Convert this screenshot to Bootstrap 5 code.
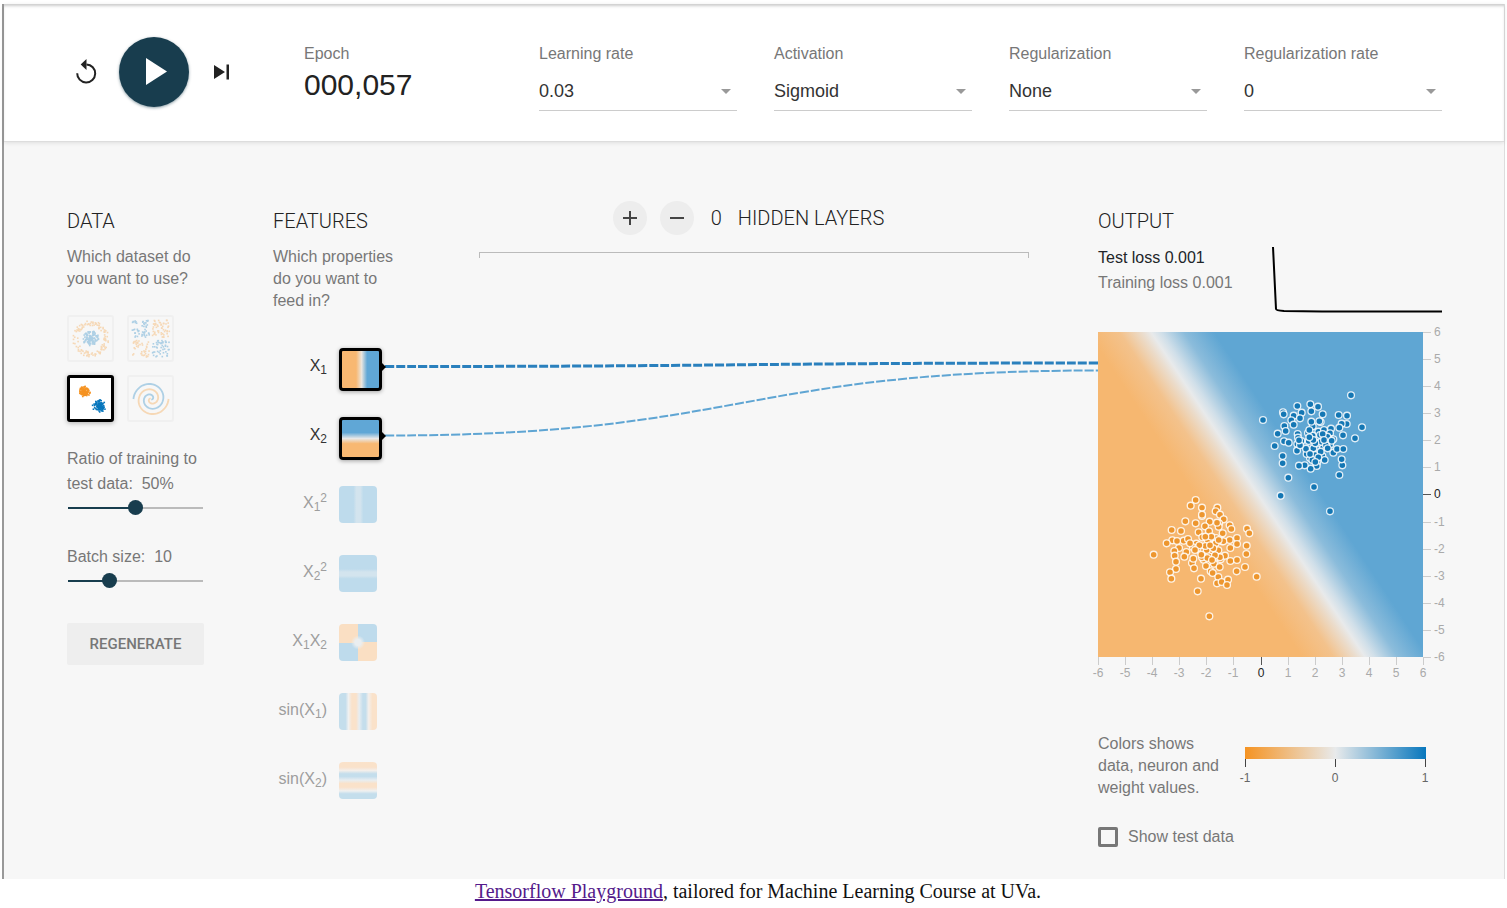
<!DOCTYPE html>
<html lang="en">
<head>
<meta charset="utf-8">
<meta name="viewport" content="width=device-width, initial-scale=1">
<title>Tensorflow Playground</title>
<link href="https://cdn.jsdelivr.net/npm/bootstrap@5.3.0/dist/css/bootstrap.min.css" rel="stylesheet">
<style>
body{font-family:"Liberation Sans",Arial,sans-serif;font-size:16px;line-height:22px;color:#777;background:#fff}
.frame{margin:4px 2px 0;border-left:2px solid #999;border-right:1px solid #ddd;background:#f7f7f7}
.topbar{background:#fff;padding:33px 62px 30px 63px;border-bottom:1px solid #ddd;box-shadow:inset 0 3px 3px -1px #ccc,0 1px 4px rgba(0,0,0,.1);display:grid;grid-template-columns:200px repeat(5,1fr);column-gap:37px}
.controls{height:70px}
.icon-btn{border:0;background:none;padding:0;color:#222;line-height:0}
.play-btn{width:70px;height:70px;margin-left:19px;border-radius:50%;background:#183d4e;color:#fff;box-shadow:0 1px 3px rgba(24,61,78,.5)}
.field-label{display:block;line-height:22px;margin-top:6px}
.epoch-value{font-size:30px;line-height:40px;color:#222}
.pick{appearance:none;border:0;border-bottom:1px solid #ccc;border-radius:0;width:100%;padding:0 0 2px;margin-top:8px;height:38px;font-size:18px;color:#333;background:url("data:image/svg+xml,%3Csvg xmlns='http://www.w3.org/2000/svg' width='10' height='5'%3E%3Cpath d='M0 0h10L5 5z' fill='%23999'/%3E%3C/svg%3E") no-repeat right 6px top 16px}
.workspace{padding:59px 62px 32px 63px;display:grid;grid-template-columns:137px 137px 1fr 344px;column-gap:69px;align-items:start}
.workspace>section{grid-row:1}
.side{padding-top:9px}
h2{font-family:Roboto,sans-serif;font-size:20px;line-height:22px;font-weight:300;color:#222;margin:0 0 13px}
.intro{margin:14px 0 0}
.sets{display:grid;grid-template-columns:47px 47px;gap:13px;margin-top:25px}
.set-btn{height:47px;padding:0;border:2px solid #f0f0f0;border-radius:3px;background:none;line-height:0}
.set-btn svg{display:block;width:100%;height:100%;opacity:.3}
.set-btn.chosen{border:3px solid #000;background:#fff;box-shadow:0 1px 5px rgba(0,0,0,.3)}
.set-btn.chosen svg{opacity:1}
.slide-label{display:block;line-height:25px;margin-top:24px}
.slide-label.batch{margin-top:29px}
.slider{appearance:none;display:block;width:100%;height:15px;margin:4px 0 0;background:linear-gradient(#183d4e,#183d4e) 1px 7px/var(--fill) 2px no-repeat,linear-gradient(#bbb,#bbb) 1px 7px/135px 2px no-repeat}
.slider::-webkit-slider-thumb{appearance:none;width:15px;height:15px;border-radius:50%;background:#183d4e}
.slider::-moz-range-thumb{border:0;width:15px;height:15px;border-radius:50%;background:#183d4e}
.regen{width:100%;height:42px;margin-top:35px;padding:0;border:0;border-radius:2px;background:#eee;color:#777;font:500 15px Roboto,sans-serif}
.feats{margin-top:36px}
.feat{height:69px;display:flex;gap:12px;opacity:.8}
.feat label{width:54px;text-align:right;line-height:34px;color:#888;white-space:nowrap}
.feat sub,.feat sup{font-size:12px}
.swatch{position:relative;flex:none;width:38px;height:37px;border:0;padding:0;border-radius:4px}
.feat.on{opacity:1}
.feat.on label{color:#333;line-height:36px}
.on .swatch{width:43px;height:43px;border:3px solid #000;box-shadow:0 1px 4px rgba(0,0,0,.35)}
.on .swatch::after{content:"";position:absolute;left:100%;top:50%;margin:-8px 0 0 2px;border:5px solid transparent;border-left-color:#000;border-right:0}
.f-x1{background:linear-gradient(90deg,#f8b872 38%,#ebe6df 53%,#60a7d6 68%)}
.f-x2{background:linear-gradient(#60a7d6 34%,#e8e8e8 50%,#f8b872 64%)}
.f-x1sq{background:linear-gradient(90deg,#b1d5ea 38%,#cbe0ec 46%,#cbe0ec 56%,#b1d5ea 64%)}
.f-x2sq{background:linear-gradient(#b1d5ea 38%,#cbe0ec 46%,#cbe0ec 56%,#b1d5ea 64%)}
.f-x1x2{background:radial-gradient(circle,#e8edef 3px,transparent 7px),conic-gradient(#b1d5ea 25%,#fbdab7 0 50%,#b1d5ea 0 75%,#fbdab7 0)}
.f-sin1{background:linear-gradient(90deg,#b8d8ea 17%,#eef0f0 25%,#fbddc0 34%,#fbddc0 45%,#e5ecf0 53%,#b8d8ea 63%,#b8d8ea 70%,#f3eee9 78%,#fbddc0 88%)}
.f-sin2{background:linear-gradient(0deg,#b8d8ea 14%,#eef0f0 22%,#fbddc0 32%,#fbddc0 42%,#e5ecf0 51%,#b8d8ea 61%,#b8d8ea 68%,#f3eee9 77%,#fbddc0 86%)}
.wires{grid-row:1;grid-column:2/4;margin:153px -69px 0 112px;height:90px;width:calc(100% - 43px);pointer-events:none}
.wires path{fill:none;vector-effect:non-scaling-stroke;stroke-dasharray:9 2}
.layer-tools{font-family:Roboto,sans-serif;font-size:20px;font-weight:300;color:#222;padding-right:11px;height:34px}
.round-btn{width:34px;height:34px;border:0;border-radius:50%;background:#ededed;padding:0;line-height:0;margin-right:13px}
.bracket{height:6px;margin-top:17px;border:1px solid #bbb;border-bottom:0}
.loss{line-height:25px}
.axis text{font-size:12px;fill:#aaa}
.axis line{stroke:#ccc}
.axis .zero{fill:#222;stroke:none}
.axis line.zero{stroke:#555}
.legend-row{margin-top:51px}
.legend-text{width:137px;padding-right:12px}
.test-row{margin-top:28px;height:20px;gap:10px}
.tick-box{appearance:none;width:20px;height:20px;border:3px solid #777;border-radius:2px;margin:0}
.credit{font-family:"Liberation Serif","Times New Roman",serif;font-size:20px;line-height:24px;color:#111;text-align:center;margin:0;padding-left:9px}
.credit a{color:#551a8b}
</style>
</head>
<body>
<div class="frame">
<header class="topbar">
  <div class="controls d-flex align-items-center">
    <button class="icon-btn ms-2" aria-label="Reset"><svg width="25" height="26" viewBox="0 0 25 26"><path d="M2.200 14.200A9 9 0 1 0 11.500 5.400" fill="none" stroke="currentColor" stroke-width="2"/><path d="M11.500 0v11L5.700 5.500z" fill="currentColor"/></svg></button>
    <button class="icon-btn play-btn" aria-label="Run"><svg width="70" height="70" viewBox="0 0 70 70"><path d="M27 21v27l21-13.500z" fill="currentColor"/></svg></button>
    <button class="icon-btn ms-4" aria-label="Step"><svg width="18" height="18" viewBox="0 0 18 18"><path d="M1 2v14l11-7zM13.500 1.500h2.500v15h-2.500z" fill="currentColor"/></svg></button>
  </div>
  <div><span class="field-label">Epoch</span><div class="epoch-value">000,057</div></div>
  <div><label class="field-label" for="lr">Learning rate</label><select class="pick" id="lr"><option>0.03</option></select></div>
  <div><label class="field-label" for="act">Activation</label><select class="pick" id="act"><option>Sigmoid</option></select></div>
  <div><label class="field-label" for="reg">Regularization</label><select class="pick" id="reg"><option>None</option></select></div>
  <div><label class="field-label" for="regrate">Regularization rate</label><select class="pick" id="regrate"><option>0</option></select></div>
</header>
<main class="workspace">
  <section class="side" style="grid-column:1">
    <h2>DATA</h2>
    <p class="intro">Which dataset do you want to use?</p>
    <div class="sets">
      <button class="set-btn" aria-label="Circle"><svg id="set-circle" viewBox="0 0 43 43"></svg></button>
      <button class="set-btn" aria-label="Exclusive or"><svg id="set-xor" viewBox="0 0 43 43"></svg></button>
      <button class="set-btn chosen" aria-label="Gaussian"><svg id="set-gauss" viewBox="0 0 41 41"></svg></button>
      <button class="set-btn" aria-label="Spiral"><svg id="set-spiral" viewBox="0 0 43 43"></svg></button>
    </div>
    <label class="slide-label" for="ratio">Ratio of training to test data:&nbsp; 50%</label>
    <input class="slider" id="ratio" type="range" min="0" max="100" value="50" style="--fill:67px">
    <label class="slide-label batch" for="batch">Batch size:&nbsp; 10</label>
    <input class="slider" id="batch" type="range" min="1" max="32" value="10" style="--fill:42px">
    <button class="regen">REGENERATE</button>
  </section>
  <section class="side" style="grid-column:2">
    <h2>FEATURES</h2>
    <p class="intro">Which properties do you want to feed in?</p>
    <div class="feats">
      <div class="feat on"><label for="f1">X<sub>1</sub></label><button id="f1" class="swatch f-x1"></button></div>
      <div class="feat on"><label for="f2">X<sub>2</sub></label><button id="f2" class="swatch f-x2"></button></div>
      <div class="feat"><label for="f3">X<sub>1</sub><sup>2</sup></label><button id="f3" class="swatch f-x1sq"></button></div>
      <div class="feat"><label for="f4">X<sub>2</sub><sup>2</sup></label><button id="f4" class="swatch f-x2sq"></button></div>
      <div class="feat"><label for="f5">X<sub>1</sub>X<sub>2</sub></label><button id="f5" class="swatch f-x1x2"></button></div>
      <div class="feat"><label for="f6">sin(X<sub>1</sub>)</label><button id="f6" class="swatch f-sin1"></button></div>
      <div class="feat"><label for="f7">sin(X<sub>2</sub>)</label><button id="f7" class="swatch f-sin2"></button></div>
    </div>
  </section>
  <section style="grid-column:3">
    <div class="layer-tools d-flex align-items-center justify-content-center">
      <button class="round-btn" aria-label="Add layer"><svg width="16" height="16"><path d="M1 8h14M8 1v14" stroke="#444" stroke-width="2"/></svg></button>
      <button class="round-btn" aria-label="Remove layer"><svg width="16" height="16"><path d="M1 8h14" stroke="#444" stroke-width="2"/></svg></button>
      <span class="ms-1 me-3">0</span><span>HIDDEN LAYERS</span>
    </div>
    <div class="bracket"></div>
  </section>
  <svg class="wires" viewBox="0 0 712 90" preserveAspectRatio="none">
    <path d="M0 12.500C356 12.500 356 9 712 9" stroke="#2a80bd" stroke-width="3"/>
    <path d="M0 81.500C356 81.500 356 16.500 712 16.500" stroke="#5fa5d3" stroke-width="2"/>
  </svg>
  <section class="side" style="grid-column:4">
    <h2>OUTPUT</h2>
    <div class="d-flex justify-content-between">
      <div class="loss"><div class="text-dark">Test loss 0.001</div><div>Training loss 0.001</div></div>
      <svg width="170" height="87" viewBox="0 0 170 87"><path d="M1 2L4 64Q4 65.500 12 66L50 66.500H170" fill="none" stroke="#000" stroke-width="2"/></svg>
    </div>
    <svg id="plot" class="d-block" width="344" height="350" overflow="visible">
      <defs><linearGradient id="decision" gradientUnits="userSpaceOnUse" x1="9" y1="29" x2="97" y2="-29">
        <stop offset="0" stop-color="#f6b770"/><stop offset=".25" stop-color="#f3c28c"/><stop offset=".42" stop-color="#ebdccb"/><stop offset=".5" stop-color="#e8eaeb"/><stop offset=".58" stop-color="#d0dfe9"/><stop offset=".76" stop-color="#8bbcdb"/><stop offset="1" stop-color="#5fa6d3"/>
      </linearGradient></defs>
      <rect width="325" height="325" fill="url(#decision)"/>
      <g id="axes" class="axis"></g><g id="dots" stroke="#fff" stroke-opacity=".85" stroke-width="1.300"></g>
    </svg>
    <div class="legend-row d-flex">
      <div class="legend-text">Colors shows data, neuron and weight values.</div>
      <svg width="200" height="66" overflow="visible"><defs><linearGradient id="scale"><stop stop-color="#f59322"/><stop offset=".5" stop-color="#e8eaeb"/><stop offset="1" stop-color="#0877bd"/></linearGradient></defs>
        <rect x="10" y="14" width="181" height="12" fill="url(#scale)"/><path d="M10.500 26v8M100.500 26v8M190.500 26v8" stroke="#444"/>
        <g font-size="12" fill="#666" text-anchor="middle"><text x="10" y="49">-1</text><text x="100" y="49">0</text><text x="190" y="49">1</text></g></svg>
    </div>
    <div class="test-row d-flex align-items-center"><input class="tick-box" id="testdata" type="checkbox"><label for="testdata">Show test data</label></div>
  </section>
</main>
</div>
<p class="credit"><a href="#">Tensorflow Playground</a>, tailored for Machine Learning Course at UVa.</p>
<script src="https://cdn.jsdelivr.net/npm/bootstrap@5.3.0/dist/js/bootstrap.bundle.min.js"></script>
<script>
const NS='http://www.w3.org/2000/svg', BLUE='#0877bd', ORANGE='#f59322';
function add(parent,tag,attrs,text){const e=document.createElementNS(NS,tag);for(const k in attrs)e.setAttribute(k,attrs[k]);if(text!==undefined)e.textContent=text;parent.appendChild(e)}
const $=id=>document.getElementById(id);
let seed=7;const rnd=()=>(seed=(seed*16807)%2147483647)/2147483647;
const gauss=()=>(rnd()+rnd()+rnd()+rnd()-2)*1.7;

// Axes, one tick per unit from -6 to 6
for(let v=-6;v<=6;v++){
  const p=Math.round((v+6)*325/12), c=v===0?'zero':'';
  add($('axes'),'line',{x1:p+.5,x2:p+.5,y1:325,y2:333,class:c});
  add($('axes'),'text',{x:p,y:345,'text-anchor':'middle',class:c},v);
  add($('axes'),'line',{x1:325,x2:333,y1:325-p+.5,y2:325-p+.5,class:c});
  add($('axes'),'text',{x:336,y:329-p,class:c},v);
}
// Samples of each class, in thirds of a pixel from the cluster's corner
const blue=[303,46,39,120,336,142,315,175,74,198,83,161,98,228,98,250,115,293,92,347,192,321,240,394,268,285,277,256,275,238,142,78,181,73,204,80,184,94,99,97,155,98,131,107,150,115,218,103,266,105,291,107,290,132,275,131,268,143,279,166,124,121,131,134,103,138,107,153,102,184,116,188,188,139,212,126,208,124,174,159,205,155,243,146,222,150,240,160,143,162,144,173,142,192,141,212,176,183,188,167,207,178,225,175,240,177,250,178,228,188,219,202,206,188,175,215,187,212,195,225,180,234,217,228,224,240,201,248,200,258,182,266,164,256,147,257,250,218,261,207,280,207,240,194,170,222,187,240,154,183,210,165,184,125,101,103,239,181,190,205,214,185,232,170,196,190,178,150,228,196,212,215,168,206,180,222,205,232,245,182,218,162,233,205,196,246,150,196,147,181,190,180,222,180,178,172];
const orange=[167,60,152,77,186,83,186,108,232,83,227,94,240,104,251,118,136,124,167,130,209,125,195,139,237,130,236,140,269,136,274,147,321,146,328,160,95,150,123,153,176,157,207,154,248,160,97,181,80,190,131,182,144,177,169,191,187,172,210,176,228,174,246,184,269,180,291,174,291,192,320,197,319,222,117,204,103,213,104,227,139,216,159,202,183,214,207,221,216,211,235,211,271,204,133,230,108,245,108,267,90,277,94,296,41,224,156,249,162,265,160,236,191,239,209,243,198,258,222,251,239,261,242,238,255,227,271,243,291,240,315,261,290,274,350,290,212,274,218,279,235,291,231,310,245,306,264,299,261,315,183,296,173,334,208,409,186,104,203,180,173,204,240,232,111,183,200,210,227,190,250,184,186,232,231,128,196,198,220,205,214,170,210,196,225,226,178,196,202,234,216,240,165,210,150,190,196,170,236,180,184,224];
function scatter(a,ox,oy,fill){for(let i=0;i<a.length;i+=2)add($('dots'),'circle',{cx:ox+a[i]/3,cy:oy+a[i+1]/3,r:3.4,fill:fill})}
scatter(orange,42,148,'#ed962e');scatter(blue,152,48,'#1477b4');

// Dataset thumbnails
function dot(id,x,y,f){add($(id),'rect',{x:x,y:y,width:1.6,height:1.6,fill:f})}
for(let i=0;i<120;i++){
  let t=rnd()*6.283,r=rnd()*8;dot('set-circle',21+r*Math.cos(t),21+r*Math.sin(t),BLUE);
  t=rnd()*6.283;r=13+rnd()*5;dot('set-circle',21+r*Math.cos(t),21+r*Math.sin(t),ORANGE);
  dot('set-gauss',13.500+gauss()*2,13+gauss()*2.200,ORANGE);dot('set-gauss',28.500+gauss()*2.300,27+gauss()*2.300,BLUE);
}
for(let i=0;i<190;i++){
  const x=rnd()*34-17,y=rnd()*34-17;
  dot('set-xor',21+x+Math.sign(x)*1.500,21+y+Math.sign(y)*1.500,x*y>0?BLUE:ORANGE);
}
// Two interleaved arms winding in from the left and the right edge
[[Math.PI,BLUE],[0,ORANGE]].forEach(([start,c])=>{
  let d='';for(let i=2;i<=80;i++){const r=i*.22,t=start+(80-i)/80*10.400;d+=(d?'L':'M')+(22+r*Math.cos(t)).toFixed(1)+' '+(22+r*Math.sin(t)).toFixed(1)}
  add($('set-spiral'),'path',{d:d,fill:'none',stroke:c,'stroke-width':1.8});
});
</script>
</body>
</html>
